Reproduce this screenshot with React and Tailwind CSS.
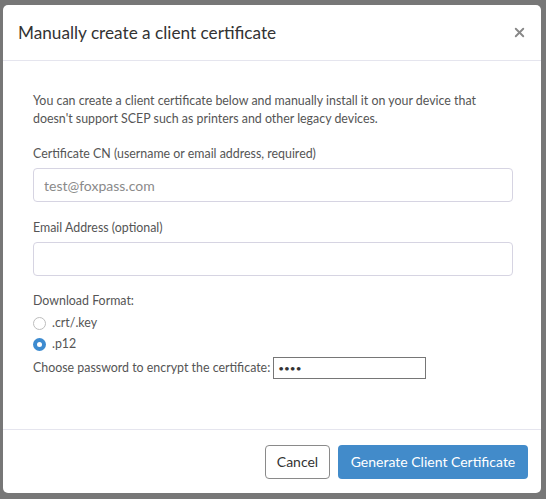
import { X } from "lucide-react";

export default function App() {
  return (
    <div
      className="relative h-[499px] w-[546px] overflow-hidden bg-[#777777] pl-[3px] pt-[5px]"
      style={{ fontFamily: 'Lato, "Open Sans", sans-serif' }}
    >
      <div className="flex h-[488px] w-[538px] flex-col rounded-[5px] bg-white">
        <div className="flex h-[56px] items-center justify-between border-b border-[#e5e5ee] pl-[15px] pr-[14px]">
          <h4 className="text-[17.2px] text-[#333]">Manually create a client certificate</h4>
          <button className="text-[#888]">
            <X size={15} strokeWidth={3} />
          </button>
        </div>

        <div className="flex-1 px-[30px] pt-[31px] text-[12.4px] text-[#555]">
          <p className="leading-[18px]">
            You can create a client certificate below and manually install it on your device that
            doesn't support SCEP such as printers and other legacy devices.
          </p>

          <label className="mt-[17px] block leading-[18px]">
            Certificate CN (username or email address, required)
          </label>
          <input
            className="mt-[5px] block h-[34px] w-[480px] rounded-[4px] border border-[#d6d4e2] px-[10px] text-[14px] placeholder:text-[#8a8a8a]"
            placeholder="test@foxpass.com"
          />

          <label className="mt-[17px] block leading-[18px]">Email Address (optional)</label>
          <input className="mt-[5px] block h-[34px] w-[480px] rounded-[4px] border border-[#d6d4e2] px-[10px] text-[14px]" />

          <div className="mt-[16px] leading-[18px]">Download Format:</div>
          <div className="mt-[3px] flex h-[21px] items-center gap-[6px]">
            <span className="h-[13px] w-[13px] rounded-full border border-[#bdbdbd] bg-white" />
            <span>.crt/.key</span>
          </div>
          <div className="flex h-[21px] items-center gap-[6px]">
            <span className="flex h-[13px] w-[13px] items-center justify-center rounded-full bg-[#3d8bd0]">
              <span className="h-[5px] w-[5px] rounded-full bg-white" />
            </span>
            <span>.p12</span>
          </div>
          <div className="mt-[2px] flex h-[22px] items-center gap-[3px]">
            <span>Choose password to encrypt the certificate:</span>
            <input
              type="password"
              defaultValue="test"
              className="h-[22px] w-[153px] border border-[#767676] px-[4px] text-[10px] text-[#333]"
            />
          </div>
        </div>

        <div className="flex h-[64px] items-center justify-end gap-[8px] border-t border-[#e5e5ee] pr-[13px]">
          <button className="h-[34px] w-[65px] rounded-[4px] border border-[#8a8a8a] bg-white text-[14px] text-[#333]">
            Cancel
          </button>
          <button className="h-[34px] w-[190px] rounded-[4px] bg-[#428bca] text-[14px] text-white">
            Generate Client Certificate
          </button>
        </div>
      </div>
    </div>
  );
}
